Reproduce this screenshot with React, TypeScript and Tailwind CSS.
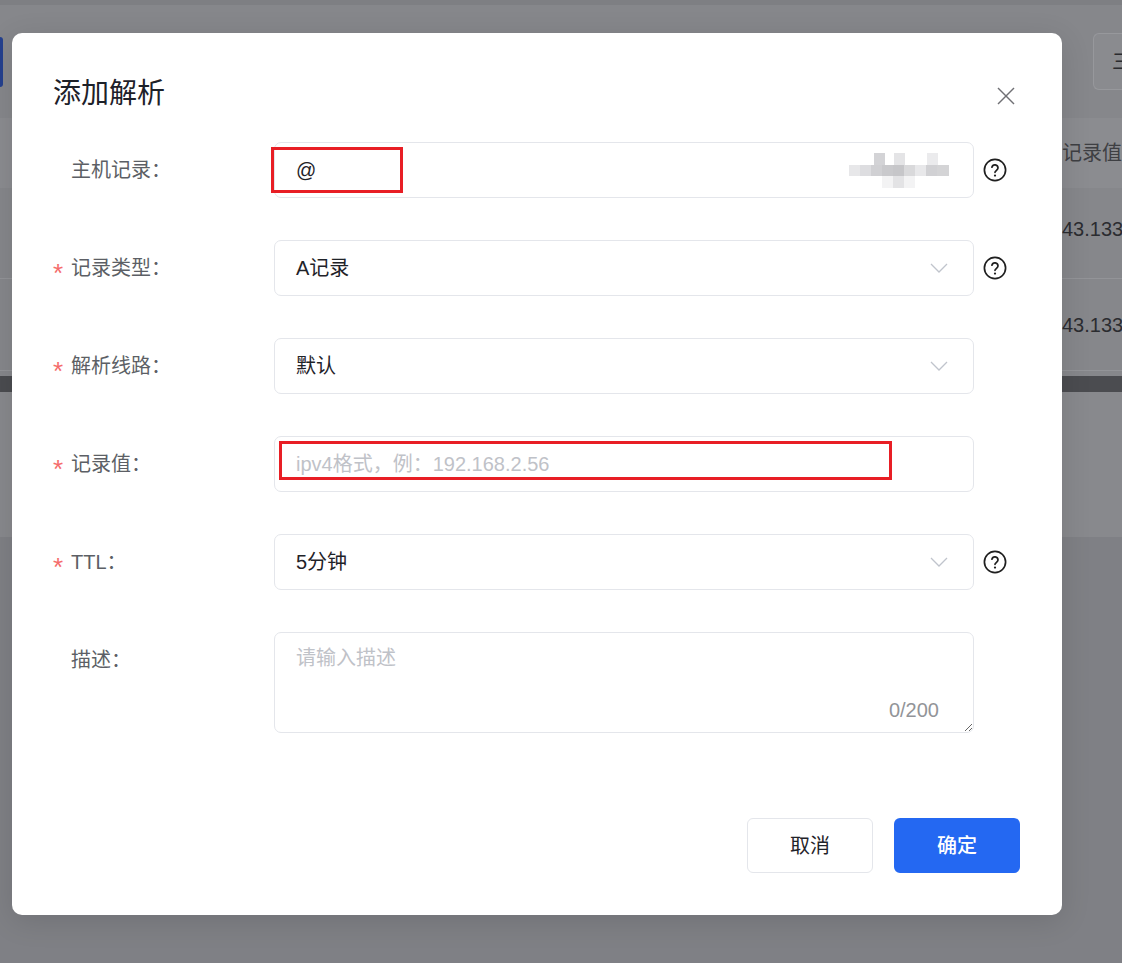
import React from "react";

const font = "font-['Liberation_Sans','Noto_Sans_CJK_SC',sans-serif]";

function HelpIcon() {
  return (
    <svg width="24" height="24" viewBox="0 0 24 24" fill="none" stroke="#1f1f1f" strokeWidth="1.7" strokeLinecap="round" strokeLinejoin="round">
      <circle cx="12" cy="12" r="10.6" />
      <path d="M8.9 9.2a3.1 3.1 0 0 1 6.1 0.8c0 2.1-3 2.9-3 4.3" />
      <path d="M12 17.6h.01" strokeWidth="2.2" />
    </svg>
  );
}

function Chevron() {
  return (
    <svg width="18" height="10" viewBox="0 0 18 10" fill="none" stroke="#c0c4cc" strokeWidth="1.3">
      <polyline points="1,1 9,9 17,1" />
    </svg>
  );
}

function Label({ text, required }: { text: string; required?: boolean }) {
  return (
    <div className="w-[221px] h-[56px] flex items-center shrink-0">
      <span className="w-[18px] text-[26px] leading-none text-[#f56c6c] translate-y-[5px]">{required ? "*" : ""}</span>
      <span className="text-[20px] leading-none text-[#5c5f65]">{text}</span>
    </div>
  );
}

const blocks: [number, number, number, number, string][] = [
  [25, 0, 11, 12, "#d3d3d6"],
  [45, 0, 11, 12, "#e4e4e6"],
  [78, 0, 11, 12, "#ebebed"],
  [0, 12, 11, 11, "#e7e7e9"],
  [11, 12, 11, 11, "#dddde0"],
  [22, 12, 11, 11, "#d0d0d3"],
  [33, 12, 11, 11, "#c9c9cc"],
  [44, 12, 11, 11, "#c6c6c9"],
  [55, 12, 11, 11, "#d9d9db"],
  [66, 12, 11, 11, "#e8e8ea"],
  [77, 12, 11, 11, "#d1d1d4"],
  [88, 12, 12, 11, "#d4d4d6"],
  [33, 23, 33, 12, "#f3f3f4"],
  [44, 23, 11, 12, "#e3e3e5"],
];

export default function App() {
  return (
    <div className={`relative w-[1122px] h-[963px] overflow-hidden bg-[#86878b] ${font}`}>
      {/* background page */}
      <div className="flex flex-col h-full">
        <div className="h-[5px] bg-[#7e7f83]" />
        <div className="h-[113px] flex justify-between items-start">
          <div className="mt-[32px] w-[3px] h-[50px] bg-[#24408e] rounded-r-[3px]" />
          <div className="mt-[28px] w-[29px] h-[57px] border border-[#97989c] border-r-0 rounded-l-[6px] bg-[#8a8b8f] flex items-center pl-[18px] overflow-hidden whitespace-nowrap text-[20px] text-[#2a2b2f]">三</div>
        </div>
        <div className="h-[70px] bg-[#8b8c90] flex justify-end items-center">
          <div className="w-[60px] whitespace-nowrap text-[20px] text-[#3e3f43]">记录值</div>
        </div>
        <div className="h-[91px] border-b border-[#939498] flex justify-end items-center">
          <div className="w-[60px] whitespace-nowrap text-[20px] text-[#2b2c30] -translate-y-[4px]">43.133</div>
        </div>
        <div className="h-[92px] border-b border-[#939498] flex justify-end items-center">
          <div className="w-[60px] whitespace-nowrap text-[20px] text-[#2b2c30]">43.133</div>
        </div>
        <div className="h-[5px]" />
        <div className="h-[16px] bg-[#4b4c50]" />
        <div className="h-[145px] bg-[#88898d]" />
        <div className="flex-1 bg-[#7f8085]" />
      </div>

      {/* modal */}
      <div className="absolute left-[12px] top-[33px] w-[1050px] h-[882px] bg-white rounded-[10px] shadow-[0_6px_30px_rgba(0,0,0,0.12)] pl-[41px] pt-[43px] flex flex-col">
        <div className="h-[36px] flex items-center justify-between pr-[47px]">
          <div className="text-[28px] leading-none text-[#1d2129]">添加解析</div>
          <svg width="18" height="18" viewBox="0 0 18 18" stroke="#707075" strokeWidth="1.5" className="mt-[4px]">
            <line x1="1" y1="1" x2="17" y2="17" />
            <line x1="17" y1="1" x2="1" y2="17" />
          </svg>
        </div>

        <div className="mt-[30px] flex flex-col gap-[42px]">
          {/* 主机记录 */}
          <div className="flex items-center">
            <Label text="主机记录：" />
            <div className="relative w-[700px] h-[56px] border border-[#e4e6eb] rounded-[7px] flex items-center pl-[21px] text-[20px] text-[#1f2329]">
              @
              <div className="absolute left-[-4px] top-[4px] w-[132px] h-[46px] border-[3px] border-[#e81e25]" />
              <svg className="absolute left-[574px] top-[10px]" width="100" height="35">
                {blocks.map(([x, y, w, h, c], i) => (
                  <rect key={i} x={x} y={y} width={w} height={h} fill={c} />
                ))}
              </svg>
            </div>
            <div className="ml-[9px]"><HelpIcon /></div>
          </div>

          {/* 记录类型 */}
          <div className="flex items-center">
            <Label text="记录类型：" required />
            <div className="w-[700px] h-[56px] border border-[#e4e6eb] rounded-[7px] flex items-center justify-between pl-[21px] pr-[25px] text-[20px] text-[#1f2329]">
              <span>A记录</span>
              <Chevron />
            </div>
            <div className="ml-[9px]"><HelpIcon /></div>
          </div>

          {/* 解析线路 */}
          <div className="flex items-center">
            <Label text="解析线路：" required />
            <div className="w-[700px] h-[56px] border border-[#e4e6eb] rounded-[7px] flex items-center justify-between pl-[21px] pr-[25px] text-[20px] text-[#1f2329]">
              <span>默认</span>
              <Chevron />
            </div>
          </div>

          {/* 记录值 */}
          <div className="flex items-center">
            <Label text="记录值：" required />
            <div className="relative w-[700px] h-[56px] border border-[#e4e6eb] rounded-[7px] flex items-center pl-[21px] text-[20px] text-[#bfc2c8]">
              ipv4格式，例：192.168.2.56
              <div className="absolute left-[4px] top-[4px] w-[613px] h-[39px] border-[3px] border-[#e81e25]" />
            </div>
          </div>

          {/* TTL */}
          <div className="flex items-center">
            <Label text="TTL：" required />
            <div className="w-[700px] h-[56px] border border-[#e4e6eb] rounded-[7px] flex items-center justify-between pl-[21px] pr-[25px] text-[20px] text-[#1f2329]">
              <span>5分钟</span>
              <Chevron />
            </div>
            <div className="ml-[9px]"><HelpIcon /></div>
          </div>

          {/* 描述 */}
          <div className="flex items-start">
            <Label text="描述：" />
            <div className="relative w-[700px] h-[101px]">
              <textarea
                readOnly
                placeholder="请输入描述"
                className="w-full h-full border border-[#e4e6eb] rounded-[7px] px-[21px] py-[12px] text-[20px] leading-[26px] text-[#1f2329] placeholder:text-[#bfc2c8] outline-none"
              />
              <div className="absolute right-[35px] bottom-[13px] text-[20px] leading-none text-[#929498]">0/200</div>
            </div>
          </div>
        </div>

        <div className="mt-[85px] flex justify-end gap-[21px] pr-[42px]">
          <div className="w-[126px] h-[55px] border border-[#e4e6eb] rounded-[6px] flex items-center justify-center text-[20px] text-[#1f2329]">取消</div>
          <div className="w-[126px] h-[55px] bg-[#2468f2] rounded-[6px] flex items-center justify-center text-[20px] font-medium text-white">确定</div>
        </div>
      </div>
    </div>
  );
}
